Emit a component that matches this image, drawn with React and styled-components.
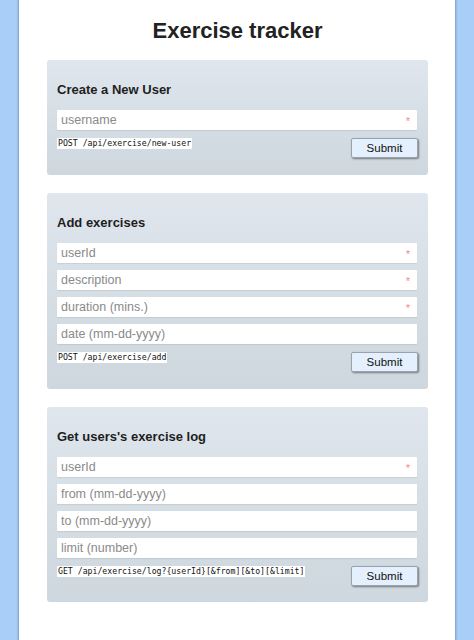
import React from "react";
import styled, { createGlobalStyle } from "styled-components";

const Global = createGlobalStyle`
  html, body { margin: 0; padding: 0; }
  body {
    background: #a9cef8;
    font-family: "Liberation Sans", Arial, sans-serif;
    color: #222;
  }
`;

const Container = styled.div`
  width: 436px;
  min-height: 640px;
  margin: 0 auto;
  background: #fff;
  box-shadow: 0 0 2px 1px rgba(60, 90, 140, 0.45);
  padding: 0 27px 30px 28px;
  box-sizing: border-box;
`;

const Title = styled.h1`
  margin: 0;
  padding: 19px 0 17px;
  font-size: 22px;
  line-height: 24px;
  font-weight: bold;
  text-align: center;
  color: #222;
`;

const Cards = styled.div`
  display: flex;
  flex-direction: column;
  gap: 18px;
`;

const Card = styled.form`
  background: linear-gradient(to bottom, #dfe6ed, #ced7de);
  border-radius: 3px;
  padding: 22px 11px 16.5px 10px;
  display: flex;
  flex-direction: column;
`;

const Heading = styled.h3`
  margin: 0 0 12.3px;
  font-size: 13px;
  line-height: 16px;
  font-weight: bold;
  color: #1e1e1e;
`;

const Fields = styled.div`
  display: flex;
  flex-direction: column;
  gap: 7px;
`;

const Field = styled.div`
  position: relative;
  height: 20px;
`;

const Input = styled.input`
  display: block;
  width: 100%;
  height: 20px;
  box-sizing: border-box;
  border: none;
  border-radius: 1px;
  box-shadow: 0 1px 1px rgba(0, 0, 0, 0.08);
  background: #fff;
  padding: 0 4px;
  font-family: "Liberation Sans", Arial, sans-serif;
  font-size: 12.5px;
  color: #333;
  outline: none;
  &::placeholder { color: #8a8a8a; }
`;

const Required = styled.span`
  position: absolute;
  right: 7px;
  top: 7px;
  font-size: 10px;
  line-height: 10px;
  color: #f57f7f;
`;

const Footer = styled.div`
  display: flex;
  justify-content: space-between;
  align-items: flex-start;
  margin-top: 8px;
`;

const Code = styled.code`
  background: #fff;
  font-family: "DejaVu Sans Mono", "Liberation Mono", monospace;
  font-size: 8.2px;
  line-height: 11px;
  padding: 0 1px;
  color: #111;
`;

const Button = styled.button`
  width: 67px;
  height: 20px;
  margin-right: -1px;
  box-sizing: border-box;
  background: #e4f0fd;
  border: 1px solid #9aa3ab;
  border-radius: 2px;
  box-shadow: 1px 1px 2px rgba(0, 0, 0, 0.45);
  font-family: "Liberation Sans", Arial, sans-serif;
  font-size: 11.5px;
  color: #111;
  padding: 0;
  cursor: pointer;
`;

const sections = [
  {
    title: "Create a New User",
    fields: [{ ph: "username", req: true }],
    code: "POST /api/exercise/new-user",
  },
  {
    title: "Add exercises",
    fields: [
      { ph: "userId", req: true },
      { ph: "description", req: true },
      { ph: "duration (mins.)", req: true },
      { ph: "date (mm-dd-yyyy)" },
    ],
    code: "POST /api/exercise/add",
  },
  {
    title: "Get users's exercise log",
    fields: [
      { ph: "userId", req: true },
      { ph: "from (mm-dd-yyyy)" },
      { ph: "to (mm-dd-yyyy)" },
      { ph: "limit (number)" },
    ],
    code: "GET /api/exercise/log?{userId}[&from][&to][&limit]",
  },
];

export default function App() {
  return (
    <>
      <Global />
      <Container>
        <Title>Exercise tracker</Title>
        <Cards>
          {sections.map((s) => (
            <Card key={s.title} onSubmit={(e) => e.preventDefault()}>
              <Heading>{s.title}</Heading>
              <Fields>
                {s.fields.map((f) => (
                  <Field key={f.ph}>
                    <Input placeholder={f.ph} />
                    {f.req && <Required>*</Required>}
                  </Field>
                ))}
              </Fields>
              <Footer>
                <Code>{s.code}</Code>
                <Button type="submit">Submit</Button>
              </Footer>
            </Card>
          ))}
        </Cards>
      </Container>
    </>
  );
}
